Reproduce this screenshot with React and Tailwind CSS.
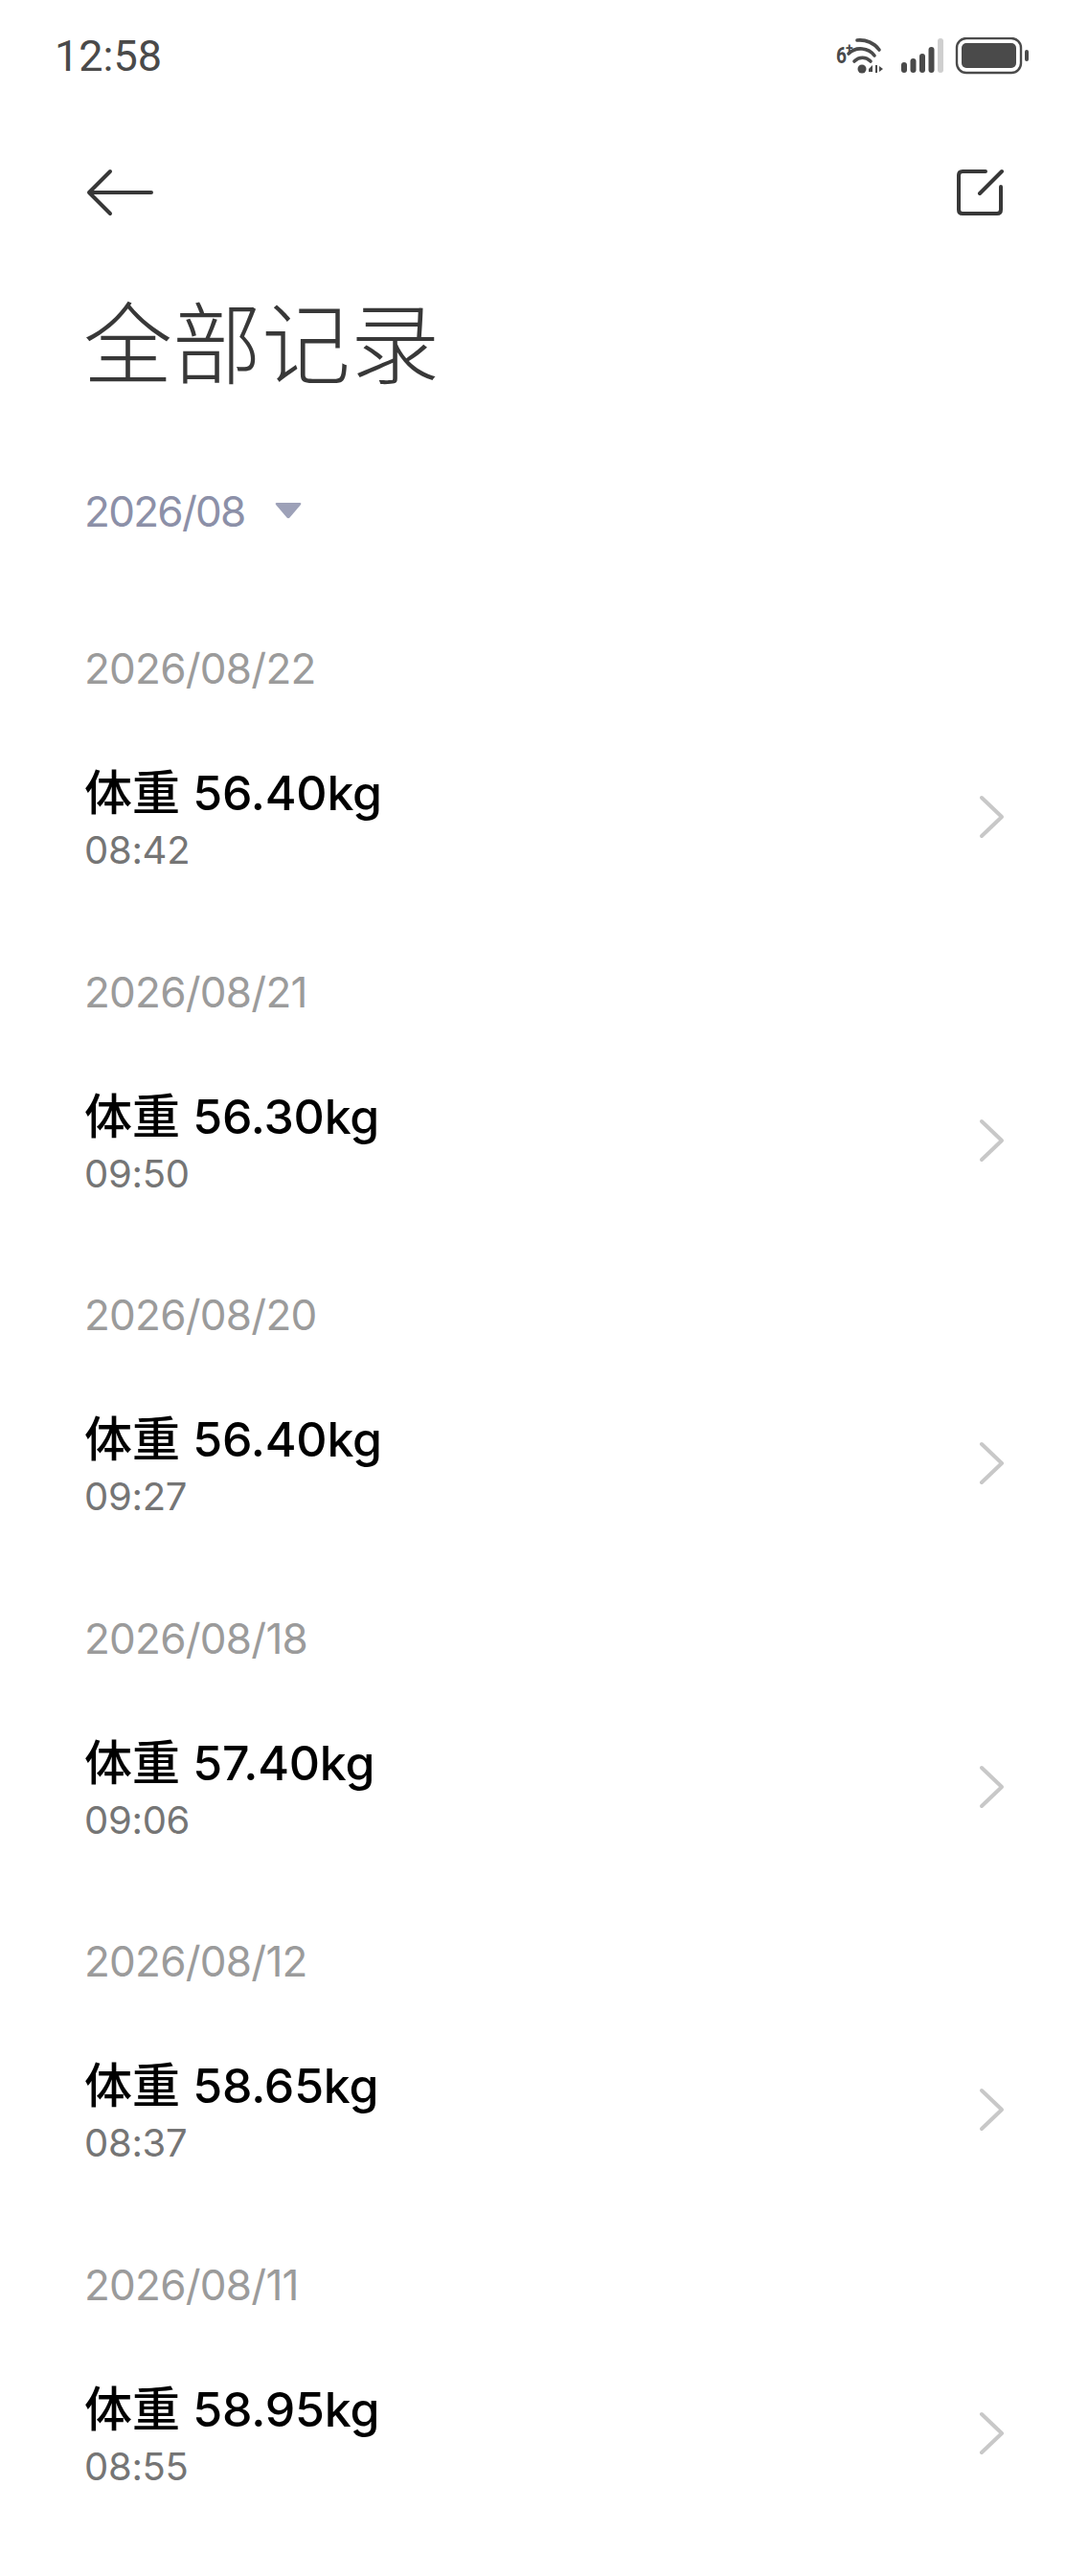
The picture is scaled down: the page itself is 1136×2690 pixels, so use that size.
import React from "react";

const rows = [
  ["2026/08/22", "56.40", "08:42"],
  ["2026/08/21", "56.30", "09:50"],
  ["2026/08/20", "56.40", "09:27"],
  ["2026/08/18", "57.40", "09:06"],
  ["2026/08/12", "58.65", "08:37"],
  ["2026/08/11", "58.95", "08:55"],
];

function StatusIcons() {
  return (
    <svg width="204" height="44" viewBox="0 0 204 44" className="block" fill="none">
      <text x="0" y="27" fontFamily="Roboto, sans-serif" fontSize="24" fontWeight="700" fill="#4a4a4a" textLength="11" lengthAdjust="spacingAndGlyphs">6</text>
      <text x="10" y="16" fontFamily="Roboto, sans-serif" fontSize="14" fontWeight="700" fill="#4a4a4a">+</text>
      <path d="M22 3 C31 2 40 6 45 13" stroke="#4a4a4a" strokeWidth="3.6" strokeLinecap="round" />
      <path d="M13 17 C21 9 34 11 40 19" stroke="#4a4a4a" strokeWidth="3.6" strokeLinecap="round" />
      <path d="M19 25 C24 20 31 20 36 25" stroke="#4a4a4a" strokeWidth="3.6" strokeLinecap="round" />
      <circle cx="27" cy="33" r="4.5" fill="#4a4a4a" />
      <path d="M34 33 L38 29 V36 H34 Z M41 29 H43 V37 H41 Z M45 30 L49 33 L45 36 Z" fill="#4a4a4a" />
      <rect x="68" y="26" width="6" height="11" rx="3" fill="#4a4a4a" />
      <rect x="77.5" y="22" width="6" height="15" rx="3" fill="#4a4a4a" />
      <rect x="87" y="17" width="6" height="20" rx="3" fill="#4a4a4a" />
      <rect x="96.5" y="10" width="6" height="27" rx="3" fill="#4a4a4a" />
      <rect x="106" y="1" width="6" height="36" rx="3" fill="#cfcfcf" />
      <rect x="126" y="1" width="67" height="36" rx="10" stroke="#4a4a4a" strokeWidth="2.4" />
      <rect x="131" y="6" width="57" height="26" rx="5" fill="#4a4a4a" />
      <rect x="197" y="13" width="4" height="12" rx="2" fill="#4a4a4a" />
    </svg>
  );
}

export default function App() {
  return (
    <div className="w-[1136px] h-[2690px] bg-white overflow-hidden font-['Inter','Noto_Sans_CJK_SC',sans-serif]">
      <div className="h-[158px] pl-[57px] pr-[59px] flex justify-between items-start">
        <span className="mt-[31px] text-[45px] leading-[56px] text-[#4a4a4a] font-['Roboto',sans-serif]">12:58</span>
        <div className="mt-[39px]"><StatusIcons /></div>
      </div>
      <div className="h-[86px] pl-[90px] pr-[88px] flex justify-between items-center">
        <svg width="72" height="50" viewBox="0 0 72 50" fill="none" stroke="#383838" strokeWidth="4" strokeLinecap="round" strokeLinejoin="round">
          <path d="M68 25 H3 M25 3 L3 25 L25 47" />
        </svg>
        <svg width="50" height="50" viewBox="0 0 50 50" fill="none" stroke="#383838" strokeWidth="4" strokeLinecap="round" strokeLinejoin="round">
          <path d="M31 3 H7 Q3 3 3 7 V43 Q3 47 7 47 H43 Q47 47 47 43 V19" />
          <path d="M48 3 L25 26" />
        </svg>
      </div>
      <h1 className="mt-[56px] pl-[87px] text-[93px] leading-[120px] font-light text-[#383838]">全部记录</h1>
      <div className="mt-[84px] pl-[88px] flex items-center h-[60px]">
        <span className="text-[44px] leading-[60px] tracking-[-1.7px] text-[#8c90a8]">2026/08</span>
        <svg width="28" height="18" viewBox="0 0 28 18" className="ml-[31px] -mt-[2px]"><path d="M2 1 H26 Q28 1 27 3 L15.5 16.5 Q14 18 12.5 16.5 L1 3 Q0 1 2 1 Z" fill="#9da1b8" /></svg>
      </div>
      <div className="mt-[104px] flex flex-col">
        {rows.map(([date, kg, time]) => (
          <div key={date} className="h-[337.6px] flex flex-col">
            <div className="pl-[88px] text-[44px] leading-[60px] h-[60px] tracking-[-0.75px] text-[#9b9b9b]">{date}</div>
            <div className="mt-[66px] pl-[88px] pr-[86px] flex items-center justify-between">
              <div className="flex flex-col">
                <span className="text-[50px] leading-[68px] font-medium text-black whitespace-pre">
                  体重 <span className="tracking-[-0.2px]">{kg}kg</span>
                </span>
                <span className="text-[40px] leading-[52px] tracking-[-0.3px] text-[#757575]">{time}</span>
              </div>
              <svg width="28" height="46" viewBox="0 0 28 46" fill="none" stroke="#c8c8c8" strokeWidth="4" strokeLinecap="round" strokeLinejoin="round" className="-mt-[2px]">
                <path d="M3 3 L24 23 L3 43" />
              </svg>
            </div>
          </div>
        ))}
      </div>
    </div>
  );
}
